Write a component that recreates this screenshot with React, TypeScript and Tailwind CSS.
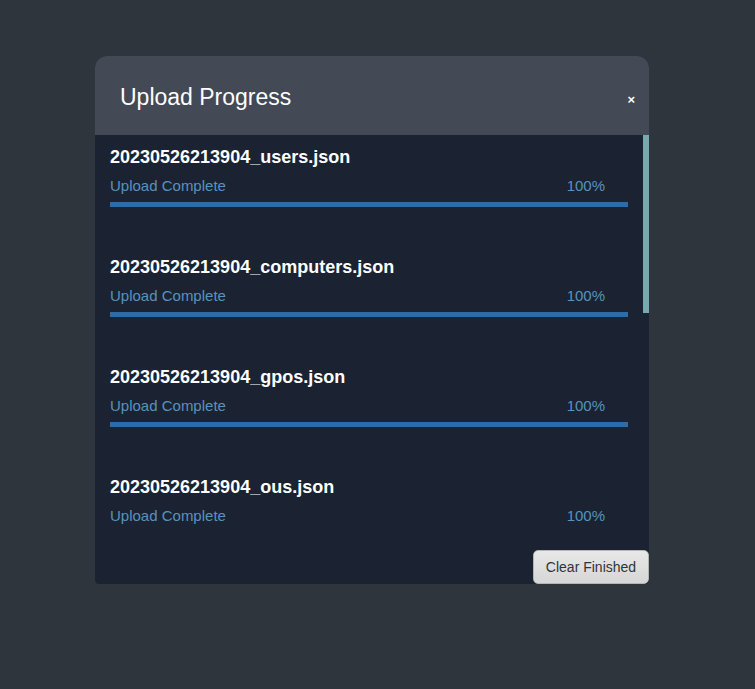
import React from "react";

const files = [
  "20230526213904_users.json",
  "20230526213904_computers.json",
  "20230526213904_gpos.json",
  "20230526213904_ous.json",
];

export default function App() {
  return (
    <div
      className="w-[755px] h-[689px] bg-[#2f353d] pt-[56px] pl-[95px]"
      style={{ fontFamily: '"Liberation Sans", Arial, sans-serif' }}
    >
      <div className="w-[554px] h-[528px] flex flex-col rounded-t-[12px] rounded-b-[4px] overflow-hidden bg-[#1b2332]">
        <div className="h-[79px] bg-[#434955] flex items-center justify-between pl-[25px] pr-[14px]">
          <span className="text-[23px] text-white leading-[28px] mt-[2px]">Upload Progress</span>
          <span className="text-[13px] font-bold text-white mt-[9px]">×</span>
        </div>
        <div className="relative h-[395px] overflow-hidden">
          <div className="absolute right-0 top-0 w-[6px] h-[178px] bg-[#78a9ae]" />
          {files.map((f, i) => (
            <div key={f} className="h-[110px] pt-[10px] pl-[15px] pr-[21px] flex flex-col">
              <div className="text-[18px] leading-[24px] font-bold text-white">{f}</div>
              <div className="mt-[7px] h-[20px] flex justify-between items-center text-[15px] text-[#5892bf] pr-[23px]">
                <span>Upload Complete</span>
                <span>100%</span>
              </div>
              {i < 3 && <div className="mt-[6px] h-[5px] bg-[#2d6ca6]" />}
            </div>
          ))}
        </div>
        <div className="flex-1 flex justify-end items-end">
          <button className="w-[116px] h-[34px] rounded-[5px] border border-[#b5b5b5] bg-gradient-to-b from-[#e8e8e8] to-[#d6d6d6] text-[14px] text-[#333] leading-none">
            Clear Finished
          </button>
        </div>
      </div>
    </div>
  );
}
